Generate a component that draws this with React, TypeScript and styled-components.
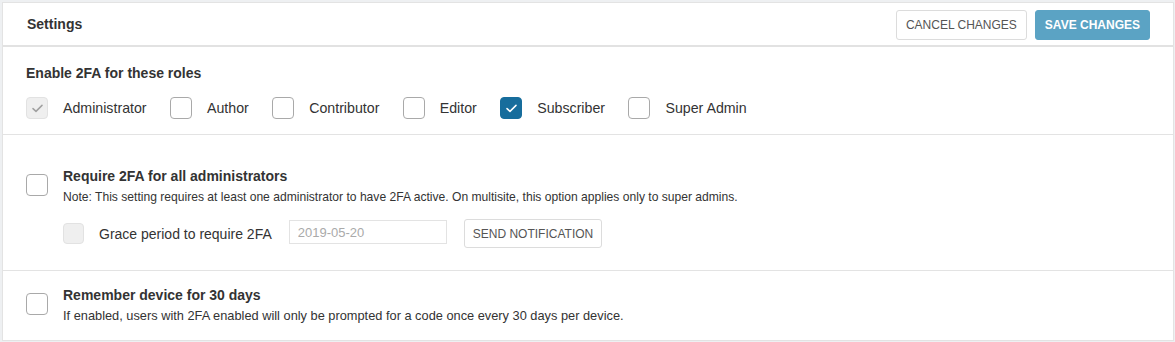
import React from "react";
import styled, { createGlobalStyle, css } from "styled-components";

const Global = createGlobalStyle`
  html, body { margin: 0; padding: 0; background: #eef0f2; }
  body { font-family: "Liberation Sans", Arial, sans-serif; color: #333; }
  * { box-sizing: border-box; }
`;

const Panel = styled.div`
  margin: 2px 1px 1px 2px;
  width: 1172px;
  height: 339px;
  background: #fff;
  border: 1px solid #e3e3e3;
  display: flex;
  flex-direction: column;
`;

const Header = styled.div`
  height: 44px;
  border-bottom: 2px solid #e2e2e2;
  display: flex;
  align-items: center;
  justify-content: space-between;
  padding: 0 23px 0 24px;
`;

const Title = styled.h1`
  margin: 0;
  font-size: 14px;
  font-weight: bold;
  color: #333;
`;

const Actions = styled.div`
  display: flex;
  gap: 8px;
  margin-top: 2px;
`;

const Button = styled.button<{ $primary?: boolean }>`
  font-family: inherit;
  height: 30px;
  font-size: 12px;
  text-transform: uppercase;
  border-radius: 3px;
  cursor: pointer;
  padding: 0 9px;
  ${(p) =>
    p.$primary
      ? css`
          background: #5ba3c4;
          border: 1px solid #5ba3c4;
          color: #fff;
          font-weight: bold;
        `
      : css`
          background: #fff;
          border: 1px solid #dcdcdc;
          color: #555;
        `}
`;

const Section = styled.div<{ $pt: number; $h: number; $last?: boolean }>`
  padding: ${(p) => p.$pt}px 24px 0 23px;
  height: ${(p) => p.$h}px;
  flex-shrink: 0;
  border-bottom: ${(p) => (p.$last ? "none" : "1px solid #e3e3e3")};
`;

const SectionTitle = styled.div`
  font-size: 14px;
  font-weight: bold;
  color: #333;
  line-height: 17px;
`;

const RoleList = styled.div`
  display: flex;
  align-items: center;
  margin-top: 15px;
`;

const RoleItem = styled.label`
  display: flex;
  align-items: center;
  margin-right: 23.4px;
`;

const Box = styled.span<{ $state: "off" | "on" | "disabled" | "disabledOff"; $size?: number }>`
  width: ${(p) => p.$size ?? 22}px;
  height: ${(p) => p.$size ?? 22}px;
  border-radius: 4px;
  display: inline-flex;
  align-items: center;
  justify-content: center;
  flex-shrink: 0;
  ${(p) =>
    p.$state === "on"
      ? css`
          background: #176d9c;
          border: 1px solid #176d9c;
        `
      : p.$state === "disabled" || p.$state === "disabledOff"
      ? css`
          background: #efefef;
          border: 1px solid #e2e2e2;
        `
      : css`
          background: #fff;
          border: 1px solid #a9a9a9;
        `}
`;

const Label = styled.span`
  font-size: 14.2px;
  color: #333;
  margin-left: 15px;
`;

const Check = ({ color }: { color: string }) => (
  <svg width="11" height="9" viewBox="0 0 11 9" fill="none">
    <path d="M1 4.6 L4 7.4 L10 1.4" stroke={color} strokeWidth="1.5" strokeLinecap="round" strokeLinejoin="round" />
  </svg>
);

const OptionRow = styled.div`
  display: flex;
  align-items: flex-start;
`;

const OptionBody = styled.div`
  margin-left: 15px;
`;

const Note = styled.div<{ $size: number; $mt: number }>`
  font-size: ${(p) => p.$size}px;
  color: #333;
  margin-top: ${(p) => p.$mt}px;
  line-height: 15px;
  white-space: nowrap;
`;

const GraceRow = styled.div`
  display: flex;
  align-items: center;
  margin-top: 14px;
`;

const GraceLabel = styled.span`
  font-size: 14px;
  color: #333;
  margin-left: 15px;
`;

const DateInput = styled.input`
  font-family: inherit;
  margin-left: 17px;
  width: 158px;
  height: 24px;
  margin-top: -3px;
  border: 1px solid #e3e3e3;
  border-radius: 0;
  padding: 0 8px;
  font-size: 13px;
  color: #aaa;
  background: #fff;
  &::placeholder { color: #aaa; }
`;

const SmallButton = styled.button`
  font-family: inherit;
  margin-left: 17px;
  height: 29px;
  padding: 0 8px;
  font-size: 12px;
  text-transform: uppercase;
  color: #555;
  background: #fff;
  border: 1px solid #dcdcdc;
  border-radius: 3px;
`;

const roles: { name: string; state: "off" | "on" | "disabled" }[] = [
  { name: "Administrator", state: "disabled" },
  { name: "Author", state: "off" },
  { name: "Contributor", state: "off" },
  { name: "Editor", state: "off" },
  { name: "Subscriber", state: "on" },
  { name: "Super Admin", state: "off" },
];

export default function App() {
  return (
    <>
      <Global />
      <Panel>
        <Header>
          <Title>Settings</Title>
          <Actions>
            <Button>Cancel Changes</Button>
            <Button $primary>Save Changes</Button>
          </Actions>
        </Header>
        <Section $pt={18} $h={88}>
          <SectionTitle>Enable 2FA for these roles</SectionTitle>
          <RoleList>
            {roles.map((r) => (
              <RoleItem key={r.name}>
                <Box $state={r.state}>
                  {r.state === "on" && <Check color="#fff" />}
                  {r.state === "disabled" && <Check color="#a0a0a0" />}
                </Box>
                <Label>{r.name}</Label>
              </RoleItem>
            ))}
          </RoleList>
        </Section>
        <Section $pt={33} $h={136}>
          <OptionRow>
            <Box $state="off" style={{ marginTop: 6 }} />
            <OptionBody>
              <SectionTitle>Require 2FA for all administrators</SectionTitle>
              <Note $size={12.1} $mt={5}>
                Note: This setting requires at least one administrator to have 2FA active. On multisite, this option applies only to super admins.
              </Note>
              <GraceRow>
                <Box $state="disabledOff" $size={21} />
                <GraceLabel>Grace period to require 2FA</GraceLabel>
                <DateInput placeholder="2019-05-20" disabled />
                <SmallButton>Send Notification</SmallButton>
              </GraceRow>
            </OptionBody>
          </OptionRow>
        </Section>
        <Section $pt={16} $h={69} $last>
          <OptionRow>
            <Box $state="off" style={{ marginTop: 6 }} />
            <OptionBody>
              <SectionTitle>Remember device for 30 days</SectionTitle>
              <Note $size={12.8} $mt={4}>If enabled, users with 2FA enabled will only be prompted for a code once every 30 days per device.</Note>
            </OptionBody>
          </OptionRow>
        </Section>
      </Panel>
    </>
  );
}
